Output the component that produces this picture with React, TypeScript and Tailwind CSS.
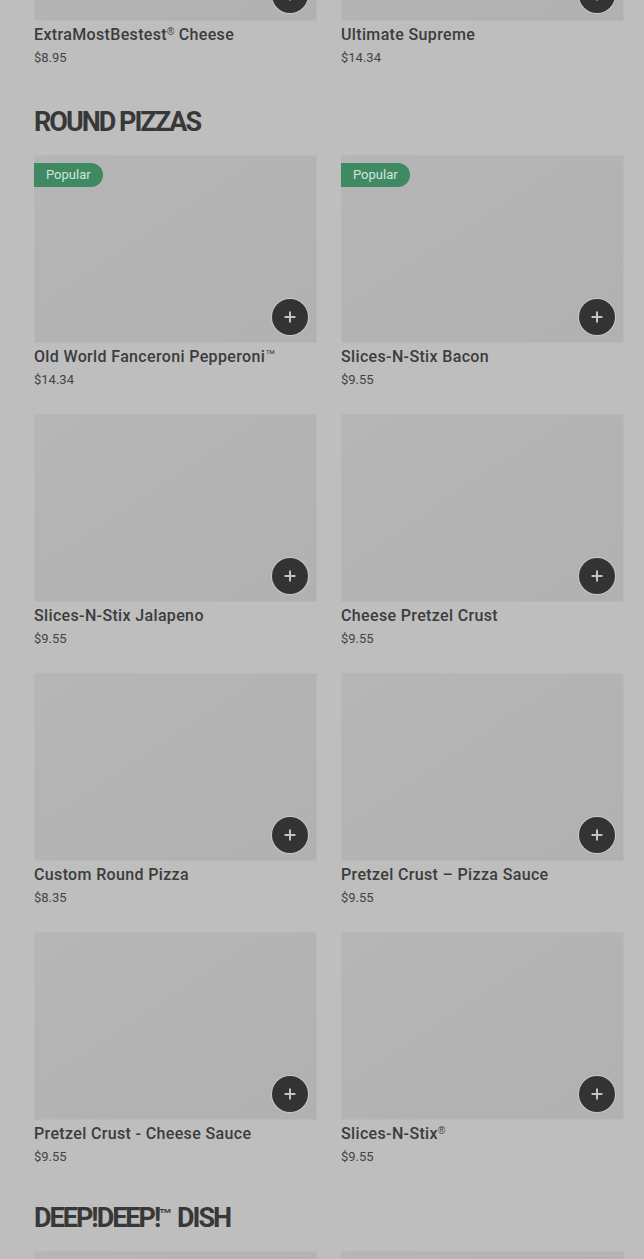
import { Plus } from "lucide-react"

type Item = { name: string; price: string; popular?: boolean }

const sections: { title: string; items: Item[] }[] = [
  {
    title: "",
    items: [
      { name: "ExtraMostBestest® Cheese", price: "$8.95" },
      { name: "Ultimate Supreme", price: "$14.34" },
    ],
  },
  {
    title: "ROUND PIZZAS",
    items: [
      { name: "Old World Fanceroni Pepperoni™", price: "$14.34", popular: true },
      { name: "Slices-N-Stix Bacon", price: "$9.55", popular: true },
      { name: "Slices-N-Stix Jalapeno", price: "$9.55" },
      { name: "Cheese Pretzel Crust", price: "$9.55" },
      { name: "Custom Round Pizza", price: "$8.35" },
      { name: "Pretzel Crust – Pizza Sauce", price: "$9.55" },
      { name: "Pretzel Crust - Cheese Sauce", price: "$9.55" },
      { name: "Slices-N-Stix®", price: "$9.55" },
    ],
  },
  {
    // only the top edge of these cards is on screen
    title: "DEEP!DEEP!™ DISH",
    items: [
      { name: "", price: "" },
      { name: "", price: "" },
    ],
  },
]

// small raised ® and ™, kept out of the line height
function Name({ text, big }: { text: string; big?: boolean }) {
  const parts = text.split(/([®™])/)
  return (
    <>
      {parts.map((p, i) =>
        p === "®" || p === "™" ? (
          <span
            key={i}
            className={
              big
                ? "inline-block align-top pt-[5px] text-[13px] leading-none tracking-normal"
                : "inline-block align-top pt-[4px] text-[10px] leading-none tracking-normal"
            }
            style={{ fontFamily: "'Liberation Sans', sans-serif" }}
          >
            {p}
          </span>
        ) : (
          <span key={i}>{p}</span>
        )
      )}
    </>
  )
}

function Card({ item }: { item: Item }) {
  return (
    <div>
      <div className="relative h-[188px] border border-[#b8b8b8] bg-gradient-to-br from-[#b6b6b6] via-[#b3b3b3] to-[#b1b1b1]">
        {item.popular && (
          <span className="absolute left-[-1px] top-[7px] flex h-6 items-center rounded-r-full bg-[#3f8a62] pl-3 pr-3 text-[13px] text-[#d6e4da]">
            Popular
          </span>
        )}
        <button className="absolute bottom-[7px] right-[8px] flex h-9 w-9 items-center justify-center rounded-full bg-[#333333] ring-1 ring-[#c8c8c8]">
          <Plus size={16} strokeWidth={3} className="text-[#c4c4c4]" />
        </button>
      </div>
      <div className="h-[25px] pt-[2px] text-[16px] font-medium leading-[23px] tracking-[0.35px] text-[#3c3c3c]">
        <Name text={item.name} />
      </div>
      <div className="mt-[2px] h-5 text-[13px] leading-5 text-[#444444]">{item.price}</div>
    </div>
  )
}

export default function App() {
  return (
    <div
      className="h-[1259px] overflow-hidden bg-[#bebebe]"
      style={{ fontFamily: "Roboto, 'Liberation Sans', sans-serif" }}
    >
      <div className="mt-[-167px] pl-[34px] pr-[20px]">
        {sections.map((s, i) => (
          <div key={i} className={i === 1 ? "mt-[38px]" : i === 2 ? "mt-[35px]" : ""}>
            {s.title && (
              <h2 className="mb-[17px] h-8 text-[27px] font-bold leading-8 tracking-[-2px] text-[#383838]">
                <Name text={s.title} big />
              </h2>
            )}
            <div className="grid grid-cols-2 gap-x-6 gap-y-6">
              {s.items.map((it, j) => (
                <Card key={j} item={it} />
              ))}
            </div>
          </div>
        ))}
      </div>
    </div>
  )
}
